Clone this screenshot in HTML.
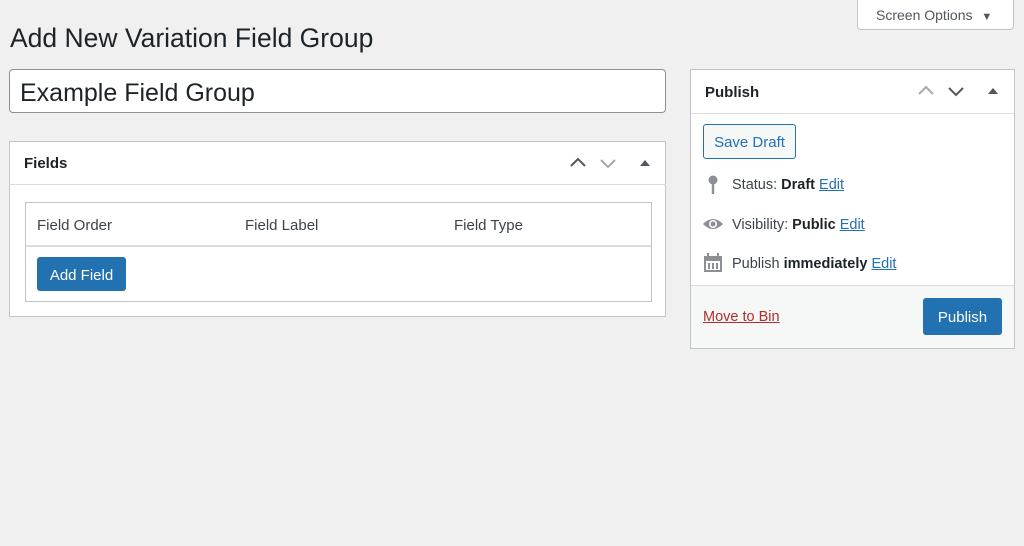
<!DOCTYPE html>
<html><head><style>
body{margin:0;width:1024px;height:546px;background:#f0f0f1;font-family:"Liberation Sans",sans-serif;color:#1d2327;position:relative;overflow:hidden}
.a{position:absolute;box-sizing:border-box}
.box{background:#fff;border:1px solid #c3c4c7}
.lnk{color:#2271b1;text-decoration:underline}
.btn{background:#2271b1;color:#fff;border-radius:3px;font-size:15px;display:flex;align-items:center;justify-content:center}
</style></head><body>
<div class="a" style="left:857px;top:-1px;width:157px;height:31px;background:#fff;border:1px solid #c3c4c7;border-radius:0 0 4px 4px;font-size:14px;color:#50575e;padding:7px 0 0 18px">Screen Options <span style="font-size:11px;margin-left:5px">▼</span></div>
<div class="a" style="left:10px;top:23px;font-size:26.5px;color:#1d2327">Add New Variation Field Group</div>
<div class="a" style="left:9px;top:69px;width:657px;height:44px;background:#fff;border:1px solid #8c8f94;border-radius:4px;font-size:25px;padding:9px 0 0 10px">Example Field Group</div>

<div class="a box" style="left:9px;top:141px;width:657px;height:176px"></div>
<div class="a" style="left:9px;top:184px;width:657px;height:1px;background:#dcdcde"></div>
<div class="a" style="left:24px;top:155px;font-size:15px;font-weight:bold">Fields</div>
<svg class="a" style="left:568px;top:155px" width="90" height="16"><path d="M3 11 L10 4 L17 11" stroke="#50575e" stroke-width="2" fill="none"/><path d="M33 5 L40 12 L47 5" stroke="#a7aaad" stroke-width="2" fill="none"/><path d="M72 11 L77 5 L82 11Z" fill="#50575e"/></svg>
<div class="a" style="left:25px;top:202px;width:627px;height:100px;border:1px solid #c3c4c7"></div>
<div class="a" style="left:26px;top:245px;width:625px;height:2px;background:#dcdcde"></div>
<div class="a" style="left:37px;top:217px;font-size:15px;color:#3c434a">Field Order</div>
<div class="a" style="left:245px;top:217px;font-size:15px;color:#3c434a">Field Label</div>
<div class="a" style="left:454px;top:217px;font-size:15px;color:#3c434a">Field Type</div>
<div class="a btn" style="left:37px;top:257px;width:89px;height:34px;padding-top:2px">Add Field</div>

<div class="a box" style="left:690px;top:69px;width:325px;height:280px"></div>
<div class="a" style="left:691px;top:113px;width:323px;height:1px;background:#dcdcde"></div>
<div class="a" style="left:691px;top:285px;width:323px;height:63px;background:#f6f7f7;border-top:1px solid #dcdcde"></div>
<div class="a" style="left:705px;top:84px;font-size:15px;font-weight:bold">Publish</div>
<svg class="a" style="left:916px;top:83px" width="90" height="16"><path d="M3 11 L10 4 L17 11" stroke="#a7aaad" stroke-width="2" fill="none"/><path d="M33 5 L40 12 L47 5" stroke="#50575e" stroke-width="2" fill="none"/><path d="M72 11 L77 5 L82 11Z" fill="#50575e"/></svg>
<div class="a" style="left:703px;top:124px;width:93px;height:35px;border:1px solid #2271b1;border-radius:3px;background:#f6f7f7;color:#2271b1;font-size:15px;display:flex;align-items:center;justify-content:center;padding-top:2px">Save Draft</div>
<svg class="a" style="left:705px;top:175px" width="16" height="20"><circle cx="8" cy="5" r="4.5" fill="#8c8f94"/><rect x="6.8" y="8" width="2.4" height="11" fill="#8c8f94"/></svg>
<div class="a" style="left:732px;top:177px;font-size:14.5px;color:#3c434a">Status: <b style="color:#1d2327">Draft</b> <span class="lnk">Edit</span></div>
<svg class="a" style="left:702px;top:216px" width="22" height="16"><path d="M1 8 Q11 -2 21 8 Q11 18 1 8Z" fill="#8c8f94"/><circle cx="11" cy="8" r="4" fill="#fff"/><circle cx="11" cy="8" r="2.5" fill="#8c8f94"/></svg>
<div class="a" style="left:732px;top:217px;font-size:14.5px;color:#3c434a">Visibility: <b style="color:#1d2327">Public</b> <span class="lnk">Edit</span></div>
<svg class="a" style="left:703px;top:253px" width="20" height="20"><rect x="1" y="3" width="18" height="16" fill="#8c8f94"/><rect x="3" y="8" width="14" height="9" fill="#fff"/><rect x="5" y="10" width="2" height="6" fill="#8c8f94"/><rect x="9" y="10" width="2" height="6" fill="#8c8f94"/><rect x="13" y="10" width="2" height="6" fill="#8c8f94"/><rect x="4" y="0" width="2" height="5" fill="#8c8f94"/><rect x="14" y="0" width="2" height="5" fill="#8c8f94"/></svg>
<div class="a" style="left:732px;top:256px;font-size:14.5px;color:#3c434a">Publish <b style="color:#1d2327">immediately</b> <span class="lnk">Edit</span></div>
<div class="a" style="left:703px;top:309px;font-size:14.5px;color:#b32d2e;text-decoration:underline">Move to Bin</div>
<div class="a btn" style="left:923px;top:298px;width:79px;height:37px;padding-top:2px">Publish</div>
</body></html>
